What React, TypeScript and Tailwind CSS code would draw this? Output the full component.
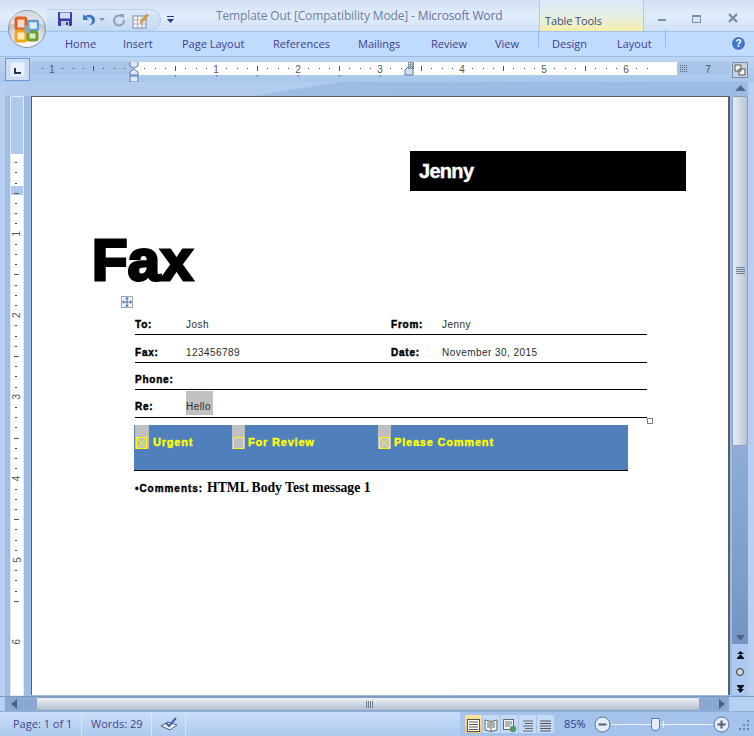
import React from "react";

const ui = { fontFamily: '"Open Sans","Noto Sans",sans-serif' };
const arial = { fontFamily: '"Liberation Sans",Arial,sans-serif' };

function OfficeButton() {
  return (
    <svg width="38" height="38" viewBox="0 0 38 38" className="absolute left-[8px] top-[10px]">
      <defs>
        <radialGradient id="ob" cx="50%" cy="85%" r="75%">
          <stop offset="0" stopColor="#ffffff" />
          <stop offset="0.55" stopColor="#dfe3e8" />
          <stop offset="1" stopColor="#a8adb5" />
        </radialGradient>
      </defs>
      <circle cx="19" cy="19" r="18.5" fill="url(#ob)" stroke="#8d95a0" />
      <path d="M2 15a17 14 0 0 1 34 0c-8-3-26-3-34 0z" fill="#fff" opacity="0.55" />
      <rect x="8" y="8" width="10" height="11" rx="1.5" fill="#f7d9c4" stroke="#e0631c" strokeWidth="3" />
      <rect x="20" y="11" width="10" height="9" rx="1.5" fill="#dcecf7" stroke="#5b9bd0" strokeWidth="2.4" />
      <rect x="8" y="21" width="10" height="10" rx="1.5" fill="#fbe9bd" stroke="#f0a818" strokeWidth="3" />
      <rect x="20" y="22" width="9" height="8" rx="1.5" fill="#dcebc4" stroke="#6ea030" strokeWidth="3" />
      <rect x="16" y="15" width="6" height="8" fill="#8faabd" opacity="0.8" />
    </svg>
  );
}

function Qat() {
  return (
    <div className="relative ml-[47px] mt-[9px] flex h-[22px] w-[114px] items-center rounded-r-[11px] border border-l-0 border-[#b9d0ee] bg-gradient-to-b from-[#dbe8f8] to-[#c6daf5]">
      <svg width="18" height="18" viewBox="0 0 18 18" className="ml-[10px]">
        <rect x="1" y="1" width="14" height="14" rx="1" fill="#3a3fa8" />
        <rect x="3" y="1.5" width="10" height="6" fill="#d8dcf2" />
        <rect x="4" y="10" width="8" height="5" fill="#c7c9d6" />
        <rect x="9" y="11" width="2" height="3" fill="#3a3fa8" />
      </svg>
      <svg width="16" height="16" viewBox="0 0 16 16" className="ml-[5px]">
        <path d="M3 2v6h6L6.6 5.8C9 4.5 12 6 12 9c0 2-1 3-3 4 4 0 6-2 6-5 0-4-5-7-10-4z" fill="#3f79c0" />
      </svg>
      <svg width="6" height="4" viewBox="0 0 6 4" className="ml-[3px]">
        <path d="M0 0h6L3 3z" fill="#7b8da8" />
      </svg>
      <svg width="14" height="14" viewBox="0 0 14 14" className="ml-[7px]">
        <path d="M10 3.5A5 5 0 1 0 12 7" fill="none" stroke="#8ea1b6" strokeWidth="2" />
        <path d="M7.5 1h4.5v4.5z" fill="#8ea1b6" />
      </svg>
      <svg width="17" height="17" viewBox="0 0 17 17" className="ml-[6px]">
        <rect x="1" y="4" width="13" height="12" fill="#f5f5f5" stroke="#7f8a98" />
        <path d="M1 8h13M1 12h13M5.5 4v12M10 4v12" stroke="#a4adb8" />
        <path d="M8 10l7-8 1.5 1.5-7 8z" fill="#e8a73c" stroke="#9a6a20" strokeWidth="0.5" />
      </svg>
      <svg width="7" height="8" viewBox="0 0 7 8" className="absolute -right-[14px] top-[6px]">
        <path d="M0 0h7v1H0zM0 3h7L3.5 7z" fill="#24417f" />
      </svg>
    </div>
  );
}

function WinButtons() {
  return (
    <div className="ml-[14px] flex h-full items-start pt-[14px]">
      <svg width="35" height="10" viewBox="0 0 35 10" className="mt-[1px]">
        <rect x="0" y="4" width="8" height="2" fill="#7c8ea4" />
      </svg>
      <svg width="35" height="10" viewBox="0 0 35 10" className="ml-[-1px]">
        <rect x="0.5" y="1.5" width="8" height="7" fill="#dbe6f4" stroke="#7c8ea4" />
        <rect x="0" y="1" width="9" height="2" fill="#7c8ea4" />
      </svg>
      <svg width="12" height="10" viewBox="0 0 12 10" className="mt-[-1px]">
        <path d="M2 1l8 8M10 1l-8 8" stroke="#7c8ea4" strokeWidth="2.4" />
      </svg>
    </div>
  );
}

const tabs: [string, number][] = [
  ["Home", 58],
  ["Insert", 59],
  ["Page Layout", 91],
  ["References", 85],
  ["Mailings", 73],
  ["Review", 64],
  ["View", 57],
  ["Design", 65],
  ["Layout", 60],
];

function HRuler() {
  const ticks: React.ReactNode[] = [];
  const z = 103;
  const inch = 82;
  for (let i = -10; i <= 50; i++) {
    const x = z + (i * inch) / 8;
    if (x < 2 || x > 698) continue;
    const m = ((i % 8) + 8) % 8;
    if (m === 0) continue;
    if (m === 4) ticks.push(<rect key={i} x={Math.round(x)} y={4} width={1} height={5} fill="#555" />);
    else ticks.push(<rect key={i} x={Math.round(x)} y={6} width={1} height={1} fill="#444" />);
  }
  const nums = [[-1, "1"], [1, "1"], [2, "2"], [3, "3"], [4, "4"], [5, "5"], [6, "6"], [7, "7"]] as [number, string][];
  return (
    <svg width="699" height="26" viewBox="0 0 699 26" className="block">
      <rect x="0" y="0" width="699" height="13" fill="#a9c4e9" />
      <rect x="103" y="0" width="543" height="13" fill="#fff" />
      {ticks}
      {nums.map(([n, t]) => (
        <text key={n} x={z + n * inch} y={10.5} textAnchor="middle" fontSize="10" fontFamily="Liberation Sans" fill="#555">
          {t}
        </text>
      ))}
      {[1, 2, 3, 4, 5, 6].map((k) => (
        <rect key={k} x={z + k * 41} y={13} width={1} height={2} fill="#6d86a8" />
      ))}
      <g>
        <path d="M99 -1h8v5l-4 2-4-2z" fill="#dfe8f5" stroke="#5a7cab" />
        <path d="M103 7l4 3v3h-8v-3z" fill="#dfe8f5" stroke="#5a7cab" />
        <rect x="99" y="14" width="8" height="6" fill="#dfe8f5" stroke="#5a7cab" />
      </g>
      <g>
        <path d="M374 13v-5l3-3h5v8z" fill="#cfe0f5" stroke="#5a7cab" />
        <path d="M377 0h6v7h-6z" fill="#5b6c85" opacity="0.7" />
        <path d="M378 1h1v1h-1zM380 1h1v1h-1zM378 3h1v1h-1zM380 3h1v1h-1zM378 5h1v1h-1zM380 5h1v1h-1z" fill="#fff" />
      </g>
      <g fill="#4d5d75">
        {[0, 2, 4, 6].flatMap((a) => [0, 2, 4, 6].map((b) => <rect key={`${a}${b}`} x={649 + a} y={3 + b} width={1} height={1} />))}
      </g>
    </svg>
  );
}

function VRuler() {
  const z = 56;
  const inch = 81.6;
  const rows: React.ReactNode[] = [];
  for (let i = -2; i <= 44; i++) {
    const y = z + (i * inch) / 8;
    if (y < 60 || y > 598) continue;
    const m = ((i % 8) + 8) % 8;
    if (m === 0) continue;
    if (m === 4) rows.push(<rect key={i} x={4} y={Math.round(y)} width={5} height={1} fill="#555" />);
    else rows.push(<rect key={i} x={5} y={Math.round(y)} width={2} height={1} fill="#444" />);
  }
  return (
    <svg width="14" height="600" viewBox="0 0 14 600" className="block">
      <rect x="0" y="0" width="14" height="600" fill="#fff" stroke="#c5d8f1" />
      <rect x="1" y="1" width="12" height="57" fill="#afc9ec" />
      <rect x="1" y="90" width="12" height="9" fill="#afc9ec" />
      {rows}
      {[1, 2, 3, 4, 5, 6].map((n) => (
        <text
          key={n}
          x={7}
          y={z + n * inch}
          fontSize="10"
          fontFamily="Liberation Sans"
          fill="#555"
          textAnchor="middle"
          dominantBaseline="central"
          transform={`rotate(-90 7 ${z + n * inch})`}
        >
          {n}
        </text>
      ))}
    </svg>
  );
}

function Check({ x, wide }: { x: boolean; wide?: boolean }) {
  return (
    <span className={`flex h-[24px] items-end bg-[#c0c0c0] pl-[1px] ${wide ? "w-[14px]" : "w-[13px]"}`}>
      <span className="flex h-[12px] w-[11px] items-center justify-center border border-[#ffff00]">
        {x && (
          <svg width="9" height="10" viewBox="0 0 9 10">
            <path d="M0 0l9 10M9 0l-9 10" stroke="#ffff00" strokeWidth="0.8" />
          </svg>
        )}
      </span>
    </span>
  );
}

const lab = "w-[51px] shrink-0 text-[10px] font-bold tracking-[0.78px] text-black [-webkit-text-stroke:0.45px_black]";
const val = "text-[10px] tracking-[0.45px] text-[#2a2a2a]";

function Doc() {
  return (
    <div className="relative h-[599px] w-[699px] border-l border-t border-r-2 border-[#55606f] bg-white pt-[54px]" style={arial}>
      <div className="ml-[378px] flex h-[40px] w-[276px] items-center bg-black pl-[9px] text-[20px] font-bold tracking-[-0.7px] text-white [-webkit-text-stroke:0.4px_white]">
        Jenny
      </div>
      <div className="ml-[60px] mt-[38px] h-[62px] text-[58px] font-bold leading-[62px] tracking-[0.4px] text-black [-webkit-text-stroke:3px_black]">
        Fax
      </div>
      <span className="absolute left-[89px] top-[199px] flex h-[12px] w-[12px] items-center justify-center border border-[#9aa4b0] bg-[#f4f8fd]">
        <svg width="10" height="10" viewBox="0 0 10 10">
          <path d="M5 0l2 2H5.5v2.5H8V3l2 2-2 2V5.5H5.5V8H7l-2 2-2-2h1.5V5.5H2V7L0 5l2-2v1.5h2.5V2H3z" fill="#3b6fc0" />
        </svg>
      </span>
      <div className="relative ml-[103px] mt-[16px] w-[512px]">
        <div className="flex h-[28px] items-center border-b border-black pt-[8px]">
          <span className={lab}>To:</span>
          <span className={`${val} w-[205px]`}>Josh</span>
          <span className={lab}>From:</span>
          <span className={val}>Jenny</span>
        </div>
        <div className="flex h-[28px] items-center border-b border-black pt-[8px]">
          <span className={lab}>Fax:</span>
          <span className={`${val} w-[205px]`}>123456789</span>
          <span className={lab}>Date:</span>
          <span className={val}>November 30, 2015</span>
        </div>
        <div className="flex h-[27px] items-center border-b border-black pt-[8px]">
          <span className={lab}>Phone:</span>
        </div>
        <div className="flex h-[28px] items-end border-b border-black pb-[2px]">
          <span className={`${lab} mb-[1px]`}>Re:</span>
          <span className={`${val} flex h-[24px] w-[27px] items-end bg-[#c0c0c0] pb-[1px] tracking-[0.2px]`}>Hello</span>
        </div>
        <span className="absolute -right-[6px] bottom-[-6px] h-[6px] w-[6px] border border-[#7d7d7d] bg-white" />
      </div>
      <div className="ml-[102px] mt-[7px] flex h-[46px] w-[494px] items-start border-b border-black bg-[#5080bb] pl-[1px] text-[11px] font-bold tracking-[0.8px] text-[#ffff00] [-webkit-text-stroke:0.35px_#ffff00]">
        <div className="flex w-[97px] items-end gap-[4px]">
          <Check x wide />
          <span className="leading-[13px]">Urgent</span>
        </div>
        <div className="flex w-[146px] items-end gap-[3px]">
          <Check x={false} />
          <span className="leading-[13px]">For Review</span>
        </div>
        <div className="flex items-end gap-[3px]">
          <Check x />
          <span className="leading-[13px]">Please Comment</span>
        </div>
      </div>
      <div className="ml-[103px] mt-[7px] flex items-baseline">
        <span className="text-[10px] font-bold tracking-[0.95px] [-webkit-text-stroke:0.4px_black]">•Comments:</span>
        <span className="ml-[4px] text-[13.7px] font-bold text-black" style={{ fontFamily: '"Liberation Serif",serif' }}>
          HTML Body Test message 1
        </span>
      </div>
    </div>
  );
}

function VScroll() {
  return (
    <div className="flex h-[613px] w-[16px] flex-col items-center">
      <div className="mt-[2px] h-[9px] w-[16px] text-center">
        <svg width="11" height="7" viewBox="0 0 11 7" className="mx-auto mt-[1px]">
          <path d="M5.5 0L11 6H0z" fill="#506a8e" />
        </svg>
      </div>
      <div className="mt-[3px] flex h-[350px] w-[16px] items-center justify-center rounded-[2px] border border-[#8aa2bf] bg-gradient-to-r from-[#e9eef5] to-[#b8c4d4]">
        <svg width="9" height="7" viewBox="0 0 9 7">
          <path d="M0 0h9v1H0zM0 2h9v1H0zM0 4h9v1H0zM0 6h9v1H0z" fill="#6d7f95" />
        </svg>
      </div>
      <div className="flex h-[198px] w-[16px] items-end justify-center bg-gradient-to-b from-[#8fadd6] to-[#7495c4] pb-[3px]">
        <svg width="9" height="6" viewBox="0 0 9 6">
          <path d="M0 0h9L4.5 6z" fill="#4d6484" />
        </svg>
      </div>
      <div className="flex w-[16px] flex-1 flex-col items-center gap-[9px] bg-[#aec9f0] pt-[7px]">
        <svg width="7" height="8" viewBox="0 0 7 8">
          <path d="M3.5 0L7 3H0zM3.5 3L7 7H0zM0 7h7v1H0z" fill="#111" />
        </svg>
        <svg width="8" height="8" viewBox="0 0 8 8">
          <circle cx="4" cy="4" r="3.5" fill="#d2d2d2" stroke="#333" />
        </svg>
        <svg width="7" height="8" viewBox="0 0 7 8">
          <path d="M0 0h7v1H0zM0 1h7L3.5 5zM0 4h7L3.5 8z" fill="#111" />
        </svg>
      </div>
    </div>
  );
}

function ViewIcon({ i }: { i: number }) {
  const lines = <path d="M3 4h9M3 6.5h9M3 9h9M3 11.5h9" stroke="#555" />;
  return (
    <span
      className={`flex h-[20px] w-[18px] items-center justify-center border-r border-[#a9c3e6] ${
        i === 0 ? "bg-gradient-to-b from-[#fde3a0] to-[#fbbf4f]" : ""
      }`}
    >
      <svg width="15" height="15" viewBox="0 0 15 15">
        {i === 0 && <rect x="1.5" y="1.5" width="12" height="12" fill="#fff" stroke="#555" />}
        {i === 0 && lines}
        {i === 1 && <path d="M1 2l6 1.5L13 2v10l-6 1.5L1 12zM7 3.5v10M3 5h3M3 7h3M3 9h3M8 5h3M8 7h3M8 9h3" fill="#f5f5f5" stroke="#666" />}
        {i === 2 && (
          <>
            <rect x="1.5" y="1.5" width="10" height="10" fill="#f5f5f5" stroke="#666" />
            <path d="M3 4h7M3 6h7M3 8h5" stroke="#777" />
            <circle cx="11" cy="11" r="3.2" fill="#4a9a6a" />
          </>
        )}
        {i === 3 && <path d="M3 3h10M5 5.5h8M3 8h10M5 10.5h8M3 13h10" stroke="#666" />}
        {i === 4 && <path d="M2 3h11M2 5.5h11M2 8h11M2 10.5h11M2 13h11" stroke="#555" />}
      </svg>
    </span>
  );
}

function Circle({ minus }: { minus: boolean }) {
  return (
    <svg width="17" height="17" viewBox="0 0 17 17">
      <circle cx="8.5" cy="8.5" r="7.5" fill="#e3ecf8" stroke="#5c7597" />
      <path d={minus ? "M4.5 7.5h8v2h-8z" : "M4.5 7.5h3v-3h2v3h3v2h-3v3h-2v-3h-3z"} fill="#555f6d" />
    </svg>
  );
}

export default function App() {
  return (
    <div className="relative flex h-[736px] w-[754px] flex-col overflow-hidden bg-[#b7d0f2]" style={ui}>
      {/* title bar */}
      <div className="flex h-[32px] border-b border-[#a4c3e8] bg-gradient-to-b from-[#d2e0f4] via-[#e1edfb] to-[#cfe1f8]">
        <Qat />
        <div className="ml-[55px] w-[323px] shrink-0 pt-[8px] text-[12px] leading-[16px] tracking-[-0.14px] text-[#707f97]">
          Template Out [Compatibility Mode] - <span className="text-[#6a6fa5]">Microsoft Word</span>
        </div>
        <div className="flex h-[31px] w-[105px] shrink-0 items-end border-x border-[#b6c9e0] bg-gradient-to-b from-[#dce9f9] via-[#e6eee6] to-[#f6efa8] pb-[3px] pl-[5px] text-[11px] leading-[15px] tracking-[-0.1px] text-[#3e4a78]">
          Table Tools
        </div>
        <WinButtons />
      </div>
      {/* tabs */}
      <div className="flex h-[25px] items-center border-b border-[#9fbde3] bg-[#bfdbff] pl-[65px] text-[11px] text-[#44408c]">
        {tabs.map(([t, w]) => (
          <span key={t} className="relative shrink-0" style={{ width: w }}>
            {t === "Design" && <span className="absolute left-[-14px] top-[-6px] h-[17px] w-[1px] bg-[#9db8da]" />}
            {t === "Layout" && <span className="absolute left-[48px] top-[-6px] h-[17px] w-[1px] bg-[#9db8da]" />}
            {t}
          </span>
        ))}
        <svg width="15" height="15" viewBox="0 0 15 15" className="ml-[54px]">
          <circle cx="7.5" cy="7.5" r="7" fill="#3f78d0" stroke="#e6effa" />
          <text x="7.5" y="11" textAnchor="middle" fontSize="10" fontWeight="bold" fill="#fff" fontFamily="Liberation Sans">
            ?
          </text>
        </svg>
      </div>
      {/* ruler row */}
      <div className="flex h-[25px] items-start bg-gradient-to-b from-[#bdd5f5] to-[#a9c6ec] pl-[5px] pt-[1px]">
        <span className="flex h-[23px] w-[25px] items-center justify-center border border-[#6f9ad6] bg-[#c9dcf6]">
          <span className="flex h-[15px] w-[15px] items-end border border-[#dbe7f7] bg-[#eaf1fb] pb-[2px] pl-[3px]">
            <span className="h-[6px] w-[7px] border-b-2 border-l-2 border-[#24375c]" />
          </span>
        </span>
        <div className="ml-[1px] mt-[4px]">
          <HRuler />
        </div>
        <span className="ml-[2px] mt-[4px] flex h-[16px] w-[16px] items-center justify-center border border-[#7a8aa2] bg-[#c8d0dc]">
          <svg width="12" height="12" viewBox="0 0 12 12">
            <path d="M1 1h6v6H1zM5 5h6v6H5z" fill="#f2f4f7" stroke="#555" />
          </svg>
        </span>
      </div>
      {/* document area */}
      <div className="relative flex flex-1 bg-gradient-to-r from-[#9fbce3] to-[#9ebbe3]">
        <div className="w-[5px] bg-[#b7d0f2]" />
        <div className="ml-[5px] mt-[14px]">
          <VRuler />
        </div>
        <div className="ml-[7px] mt-[14px]">
          <Doc />
        </div>
        <div className="ml-[2px]">
          <VScroll />
        </div>
        <div className="w-[6px] bg-[#b7d0f2]" />
        <svg width="345" height="14" viewBox="0 0 345 14" className="absolute left-[5px] top-0">
          <path d="M0 0h335L250 14H0z" fill="#b2cbee" />
        </svg>
      </div>
      {/* h scroll */}
      <div className="flex h-[16px] border-t border-[#7a9ac6] bg-[#b7d0f2]">
        <span className="ml-[5px] flex w-[31px] items-center justify-center bg-[#8aa8d2] pr-[14px]">
          <svg width="6" height="10" viewBox="0 0 6 10">
            <path d="M6 0v10L0 5z" fill="#4d6484" />
          </svg>
        </span>
        <span className="flex w-[664px] items-center justify-center rounded-[2px] border border-[#8aa2bf] bg-gradient-to-b from-[#eef1f5] to-[#b3bfcf] pl-[4px]">
          <svg width="8" height="7" viewBox="0 0 8 7">
            <path d="M0 0h1v7H0zM2 0h1v7H2zM4 0h1v7H4zM6 0h1v7H6z" fill="#6d7f95" />
          </svg>
        </span>
        <span className="flex w-[29px] items-center justify-center bg-[#8aa8d2] pl-[14px]">
          <svg width="6" height="10" viewBox="0 0 6 10">
            <path d="M0 0v10l6-5z" fill="#4d6484" />
          </svg>
        </span>
      </div>
      {/* status bar */}
      <div className="flex h-[25px] items-center border-t border-[#8fb0dc] bg-gradient-to-b from-[#c9def9] to-[#aec9ee] text-[11px] text-[#45458c]">
        <span className="flex h-full w-[82px] shrink-0 items-center border-r border-[#d8e6f8] pl-[13px]">Page: 1 of 1</span>
        <span className="flex h-full w-[70px] shrink-0 items-center border-r border-[#d8e6f8] pl-[9px]">Words: 29</span>
        <span className="flex h-full w-[34px] shrink-0 items-center justify-center border-r border-[#d8e6f8]">
          <svg width="18" height="15" viewBox="0 0 18 15">
            <path d="M1 9l7-4 9 3-7 5z" fill="#eef2f8" stroke="#4d5e85" />
            <path d="M6 6l3 3 7-8" fill="none" stroke="#3c64a8" strokeWidth="2" />
          </svg>
        </span>
        <div className="ml-[274px] flex h-full items-center bg-[#a4c2ea] px-[4px]">
          <div className="flex h-[20px] overflow-hidden rounded-[3px] border border-[#a9c3e6] bg-[#c5daf6]">
            {[0, 1, 2, 3, 4].map((i) => (
              <ViewIcon key={i} i={i} />
            ))}
          </div>
          <span className="ml-[8px] w-[28px] text-[#2d3c90]">85%</span>
          <span className="ml-[2px] flex items-center">
            <Circle minus />
          </span>
          <span className="relative h-[1px] w-[102px] bg-[#eef4fc]">
            <span className="absolute left-[40px] top-[-6px] h-[13px] w-[9px] rounded-b-[4px] border border-[#62799c] bg-[#e3ecf8]" />
            <span className="absolute left-[52px] top-[-3px] h-[7px] w-[1px] bg-[#eef4fc]" />
          </span>
          <Circle minus={false} />
          <svg width="12" height="12" viewBox="0 0 12 12" className="ml-[8px]">
            <path d="M9 2h2v2H9zM5 6h2v2H5zM9 6h2v2H9zM1 10h2v2H1zM5 10h2v2H5zM9 10h2v2H9z" fill="#6f86a8" />
          </svg>
        </div>
      </div>
      <OfficeButton />
    </div>
  );
}
